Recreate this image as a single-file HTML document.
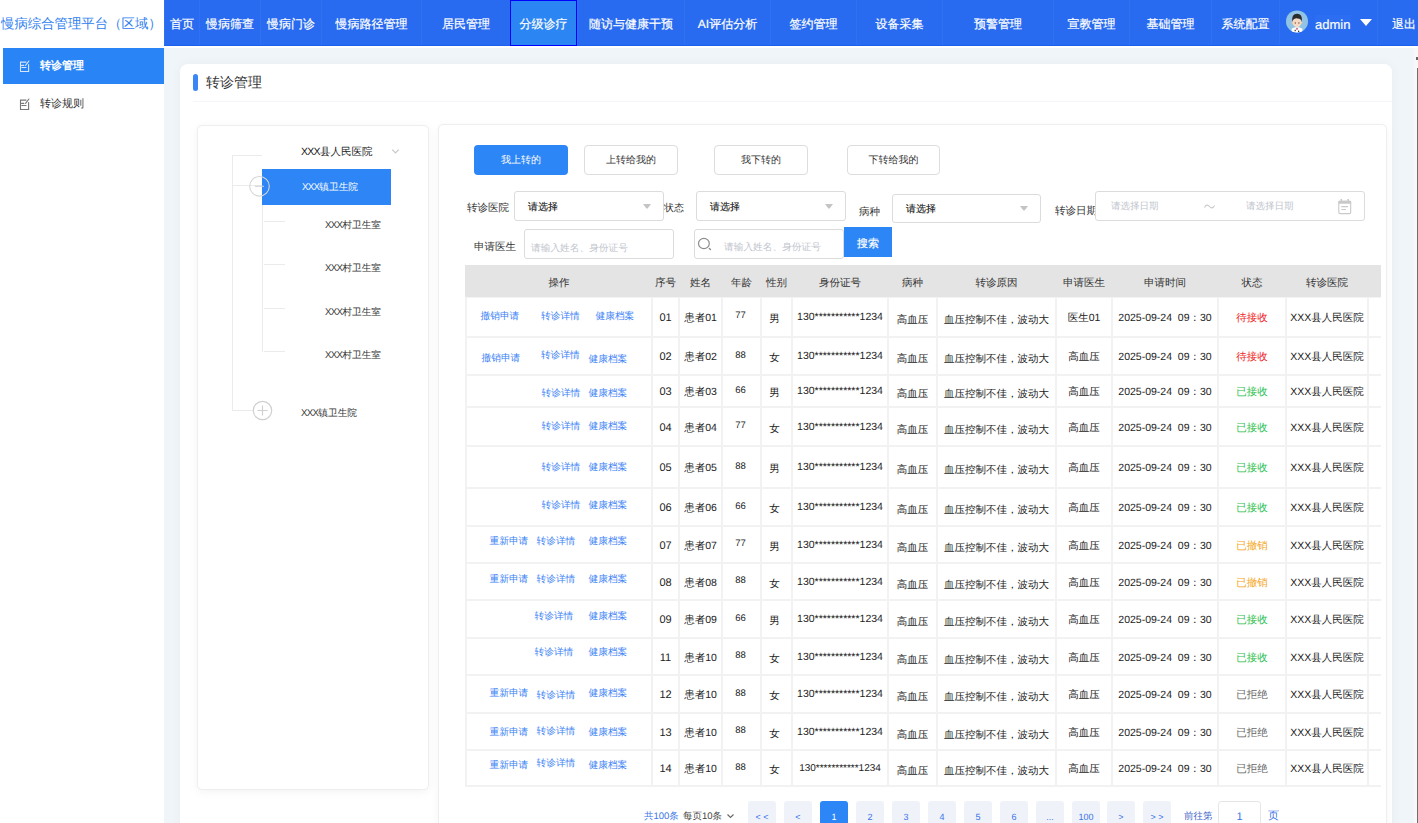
<!DOCTYPE html><html><head><meta charset="utf-8"><style>
*{box-sizing:border-box;margin:0;padding:0}
html,body{width:1418px;height:823px;overflow:hidden;background:#fff;font-family:"Liberation Sans",sans-serif;color:#222;text-rendering:geometricPrecision}
.ab{position:absolute}
.c{position:absolute;display:flex;align-items:center;justify-content:center;white-space:nowrap}
.nav{position:absolute;top:0;height:45px;display:flex;align-items:center;justify-content:center;color:#fff;font-size:12px;white-space:nowrap;border-left:1px solid #2f72f1;padding-top:3px;-webkit-text-stroke:0.2px #fff}
.lk{position:absolute;font-size:9.7px;line-height:10px;color:#3b82f6;white-space:nowrap}
.pg{position:absolute;top:801px;width:28px;height:30px;border-radius:3px;background:#eff3f9;color:#3b74e8;font-size:9px;line-height:12px;display:flex;justify-content:center;padding-top:10px}
.x{letter-spacing:-0.7px}

</style></head><body>
<div class="ab" style="left:0;top:0;width:164px;height:45px;background:#fff"></div>
<div class="c" style="left:0;top:0;width:164px;height:46px;color:#2f80ef;font-size:13.4px;justify-content:flex-start;padding-left:1px;padding-top:1px">慢病综合管理平台（区域）</div>
<div class="ab" style="left:164px;top:0;width:1254px;height:46px;background:#286af0;border-bottom:1px solid #1c60ee"></div>
<div class="nav" style="left:164px;width:35px">首页</div>
<div class="nav" style="left:199px;width:61px">慢病筛查</div>
<div class="nav" style="left:260px;width:61px">慢病门诊</div>
<div class="nav" style="left:321px;width:100px">慢病路径管理</div>
<div class="nav" style="left:421px;width:89px">居民管理</div>
<div class="nav" style="left:510px;width:67px;background:#2b86f3;border:1px solid #0000ff;height:46px;padding-top:2px">分级诊疗</div>
<div class="nav" style="left:577px;width:107px">随访与健康干预</div>
<div class="nav" style="left:684px;width:86px">AI评估分析</div>
<div class="nav" style="left:770px;width:86px">签约管理</div>
<div class="nav" style="left:856px;width:86px">设备采集</div>
<div class="nav" style="left:942px;width:111px">预警管理</div>
<div class="nav" style="left:1053px;width:76px">宣教管理</div>
<div class="nav" style="left:1129px;width:82px">基础管理</div>
<div class="nav" style="left:1211px;width:68px">系统配置</div>
<div class="nav" style="left:1279px;width:98px"></div>
<svg class="ab" style="left:1286px;top:10px" width="23" height="23" viewBox="0 0 23 23">
<defs><clipPath id="av"><circle cx="11" cy="11.4" r="11"/></clipPath></defs>
<circle cx="11" cy="11.4" r="11" fill="#91c4e4"/>
<g clip-path="url(#av)">
<path d="M5.2 24 L5.8 18.6 Q11 15.6 16.2 18.6 L16.8 24Z" fill="#fdfdfd"/>
<path d="M9.2 16.5 L11 19.2 L12.8 16.5Z" fill="#e6e9ee"/>
<circle cx="11" cy="18.8" r="0.9" fill="#c2406a"/>
<rect x="8.6" y="19.8" width="1.2" height="1.4" fill="#333"/>
<rect x="12.1" y="20.6" width="1.1" height="1.6" fill="#222"/>
</g>
<ellipse cx="6.5" cy="12.6" rx="0.9" ry="1.2" fill="#eec4a6"/>
<ellipse cx="15.5" cy="12.6" rx="0.9" ry="1.2" fill="#eec4a6"/>
<ellipse cx="11" cy="12.6" rx="4.4" ry="4.6" fill="#f5d9c2"/>
<path d="M6.1 12 Q5.4 3.9 11 3.8 Q16.8 3.9 15.9 12 Q15.3 8.2 11.5 8.4 Q7.2 8 6.1 12Z" fill="#2b2b2b"/>
<circle cx="9.3" cy="13" r="0.65" fill="#6b4b3b"/>
<circle cx="12.9" cy="13" r="0.65" fill="#6b4b3b"/>
</svg>
<div class="ab" style="left:1315px;top:15px;width:36px;height:15px;background:#2c6ef1"></div>
<div class="ab" style="left:1315px;top:16px;font-size:13px;line-height:18px;color:#fff;-webkit-text-stroke:0.15px #fff">admin</div>
<svg class="ab" style="left:1360px;top:19px" width="12" height="7" viewBox="0 0 12 7"><path d="M0 0H12L6 7Z" fill="#fff"/></svg>
<div class="nav" style="left:1377px;width:60px;justify-content:flex-start;padding-left:14px">退出</div>
<div class="ab" style="left:0;top:46px;width:1418px;height:2px;background:#fff"></div>
<div class="ab" style="left:164px;top:48px;width:1250px;height:775px;background:#f0f5fa"></div>
<div class="ab" style="left:1414px;top:48px;width:4px;height:775px;background:#f8f8f8"></div>
<div class="ab" style="left:1416px;top:57px;width:2px;height:3px;background:#666"></div>
<div class="ab" style="left:3px;top:48px;width:161px;height:36px;background:#2984f5"></div>
<svg class="ab" style="left:19px;top:59.6px" width="12" height="13" viewBox="0 0 12 13" fill="none" stroke="#fff" stroke-width="1.1" stroke-opacity="0.8" stroke-linecap="round">
<path d="M7 2.1H1.5V11.5H9.6V4.6"/><path d="M6.6 5.4L9.9 1"/><path d="M2.6 5.4H4.8M2.8 7.5H7"/></svg>
<div class="ab" style="left:40px;top:59px;font-size:11px;line-height:14px;color:#fff;font-weight:700">转诊管理</div>
<svg class="ab" style="left:19px;top:97.6px" width="12" height="13" viewBox="0 0 12 13" fill="none" stroke="#555" stroke-width="1.1" stroke-opacity="0.8" stroke-linecap="round">
<path d="M7 2.1H1.5V11.5H9.6V4.6"/><path d="M6.6 5.4L9.9 1"/><path d="M2.6 5.4H4.8M2.8 7.5H7"/></svg>
<div class="ab" style="left:40px;top:97px;font-size:11px;line-height:14px;color:#333">转诊规则</div>
<div class="ab" style="left:1417px;top:68px;width:1px;height:755px;background:#6e6e6e"></div>
<div class="ab" style="left:180px;top:64px;width:1212px;height:800px;background:#fff;border-radius:8px;box-shadow:0 0 12px rgba(0,0,0,0.04)"></div>
<div class="ab" style="left:193px;top:74px;width:5px;height:17px;background:#3b86f7;border-radius:3px"></div>
<div class="ab" style="left:206px;top:72px;font-size:14px;line-height:20px;color:#333">转诊管理</div>
<div class="ab" style="left:193px;top:101px;width:1199px;height:1px;background:#f3f5f8"></div>
<div class="ab" style="left:197px;top:125px;width:232px;height:665px;background:#fff;border:1px solid #eee;border-radius:5px;box-shadow:0 2px 10px rgba(0,0,0,0.05)"></div>
<div class="ab" style="left:232px;top:155px;width:1px;height:256px;background:#ebebeb"></div>
<div class="ab" style="left:232px;top:155px;width:30px;height:1px;background:#ebebeb"></div>
<div class="ab" style="left:232px;top:185px;width:30px;height:1px;background:#ebebeb"></div>
<div class="ab" style="left:232px;top:410px;width:22px;height:1px;background:#ebebeb"></div>
<div class="ab" style="left:301px;top:144px;font-size:10.5px;line-height:16px;color:#222"><span class=x>XXX</span>县人民医院</div>
<svg class="ab" style="left:391px;top:148px" width="9" height="7" viewBox="0 0 9 7"><path d="M1.3 1.6L4.5 4.9L7.7 1.6" fill="none" stroke="#c8c8c8" stroke-width="1.3"/></svg>
<div class="ab" style="left:262px;top:169px;width:129px;height:36px;background:#2d85f6"></div>
<svg class="ab" style="left:248px;top:175px" width="23" height="23" viewBox="0 0 23 23"><circle cx="11.5" cy="11.3" r="9.8" fill="none" stroke="#d6d6d6" stroke-width="1.1"/><path d="M7 11.3H16" stroke="#d0d0d0" stroke-width="1"/></svg>
<div class="ab" style="left:302px;top:181px;font-size:9.7px;line-height:14px;color:#fff"><span class=x>XXX</span>镇卫生院</div>
<div class="ab" style="left:262px;top:205px;width:1px;height:147px;background:#ebebeb"></div>
<div class="ab" style="left:264px;top:221px;width:21px;height:1px;background:#ebebeb"></div>
<div class="ab" style="left:325px;top:219px;font-size:9.7px;line-height:14px;color:#333"><span class=x>XXX</span>村卫生室</div>
<div class="ab" style="left:264px;top:264px;width:21px;height:1px;background:#ebebeb"></div>
<div class="ab" style="left:325px;top:262px;font-size:9.7px;line-height:14px;color:#333"><span class=x>XXX</span>村卫生室</div>
<div class="ab" style="left:264px;top:308px;width:21px;height:1px;background:#ebebeb"></div>
<div class="ab" style="left:325px;top:306px;font-size:9.7px;line-height:14px;color:#333"><span class=x>XXX</span>村卫生室</div>
<div class="ab" style="left:264px;top:351px;width:21px;height:1px;background:#ebebeb"></div>
<div class="ab" style="left:325px;top:349px;font-size:9.7px;line-height:14px;color:#333"><span class=x>XXX</span>村卫生室</div>
<svg class="ab" style="left:252px;top:400px" width="21" height="21" viewBox="0 0 21 21"><circle cx="10.5" cy="10.5" r="9.2" fill="#fff" stroke="#d0d0d0" stroke-width="1.2"/><path d="M5.5 10.5H15.5M10.5 5.5V15.5" stroke="#d0d0d0" stroke-width="1.2"/></svg>
<div class="ab" style="left:301px;top:407px;font-size:9.7px;line-height:14px;color:#333"><span class=x>XXX</span>镇卫生院</div>
<div class="ab" style="left:438px;top:124px;width:949px;height:760px;background:#fff;border:1px solid #eee;border-radius:5px;box-shadow:0 2px 10px rgba(0,0,0,0.04)"></div>
<div class="c" style="left:474px;top:145px;width:94px;height:30px;background:#2d86f6;border-radius:4px;color:#fff;font-size:10px">我上转的</div>
<div class="c" style="left:584px;top:145px;width:94px;height:30px;background:#fff;border:1px solid #ddd;border-radius:4px;color:#333;font-size:10px">上转给我的</div>
<div class="c" style="left:714px;top:145px;width:94px;height:30px;background:#fff;border:1px solid #ddd;border-radius:4px;color:#333;font-size:10px">我下转的</div>
<div class="c" style="left:847px;top:145px;width:93px;height:30px;background:#fff;border:1px solid #ddd;border-radius:4px;color:#333;font-size:10px">下转给我的</div>
<div class="ab" style="left:467px;top:201px;font-size:10.5px;line-height:14px;color:#333">转诊医院</div>
<div class="ab" style="left:514px;top:191px;width:150px;height:30px;border:1px solid #dcdcdc;border-radius:3px;background:#fff"></div>
<div class="ab" style="left:528px;top:201px;font-size:10px;line-height:14px;color:#111;-webkit-text-stroke:0.1px #111">请选择</div>
<svg class="ab" style="left:643px;top:204px" width="8" height="5" viewBox="0 0 8 5"><path d="M0 0H8L4.6 4.6H3.4Z" fill="#c4c4c4"/></svg>
<div class="ab" style="left:664px;top:202px;font-size:10px;line-height:14px;color:#333">状态</div>
<div class="ab" style="left:696px;top:191px;width:150px;height:30px;border:1px solid #dcdcdc;border-radius:3px;background:#fff"></div>
<div class="ab" style="left:710px;top:201px;font-size:10px;line-height:14px;color:#111;-webkit-text-stroke:0.1px #111">请选择</div>
<svg class="ab" style="left:825px;top:204px" width="8" height="5" viewBox="0 0 8 5"><path d="M0 0H8L4.6 4.6H3.4Z" fill="#c4c4c4"/></svg>
<div class="ab" style="left:859px;top:205px;font-size:10.5px;line-height:14px;color:#333">病种</div>
<div class="ab" style="left:892px;top:194px;width:149px;height:29px;border:1px solid #dcdcdc;border-radius:3px;background:#fff"></div>
<div class="ab" style="left:906px;top:203px;font-size:10px;line-height:14px;color:#111;-webkit-text-stroke:0.1px #111">请选择</div>
<svg class="ab" style="left:1020px;top:206px" width="8" height="5" viewBox="0 0 8 5"><path d="M0 0H8L4.6 4.6H3.4Z" fill="#c4c4c4"/></svg>
<div class="ab" style="left:1055px;top:204px;font-size:10.5px;line-height:14px;color:#333">转诊日期</div>
<div class="ab" style="left:1095px;top:191px;width:270px;height:30px;border:1px solid #dcdcdc;border-radius:3px;background:#fff"></div>
<div class="ab" style="left:1111px;top:200px;font-size:9.5px;line-height:14px;color:#c0c4cc">请选择日期</div>
<svg class="ab" style="left:1204px;top:204px" width="11" height="5" viewBox="0 0 11 5"><path d="M0.5 3.5C2 0.5 4 0.5 5.5 2.5S9 4.5 10.5 1.5" fill="none" stroke="#c8c8c8" stroke-width="1.1"/></svg>
<div class="ab" style="left:1246px;top:200px;font-size:9.5px;line-height:14px;color:#c0c4cc">请选择日期</div>
<svg class="ab" style="left:1337px;top:198px" width="15" height="17" viewBox="0 0 15 17"><rect x="1.8" y="3.3" width="11.9" height="12.3" rx="1.3" fill="none" stroke="#c9c9c9" stroke-width="1.1"/><rect x="1.3" y="2.8" width="12.9" height="3" rx="1" fill="#c9c9c9"/><rect x="3.5" y="1" width="1.6" height="2.5" fill="#c9c9c9"/><rect x="10.4" y="1" width="1.6" height="2.5" fill="#c9c9c9"/><path d="M4.3 8.6H11M4.3 11.5H9" stroke="#c9c9c9" stroke-width="1.1"/></svg>
<div class="ab" style="left:474px;top:240px;font-size:10.5px;line-height:14px;color:#333">申请医生</div>
<div class="ab" style="left:524px;top:229px;width:150px;height:30px;border:1px solid #dcdcdc;border-radius:3px;background:#fff"></div>
<div class="ab" style="left:531px;top:242px;font-size:9.7px;line-height:14px;color:#c0c4cc">请输入姓名、身份证号</div>
<div class="ab" style="left:694px;top:229px;width:150px;height:30px;border:1px solid #dcdcdc;border-radius:3px;background:#fff"></div>
<svg class="ab" style="left:697px;top:237px" width="16" height="15" viewBox="0 0 16 15"><ellipse cx="6.9" cy="6.5" rx="5.4" ry="5.1" fill="none" stroke="#8c8c8c" stroke-width="1.2"/><path d="M12.3 11.4L13.5 12.5" stroke="#8c8c8c" stroke-width="1.4" stroke-linecap="round"/></svg>
<div class="ab" style="left:724px;top:241px;font-size:9.7px;line-height:14px;color:#c0c4cc">请输入姓名、身份证号</div>
<div class="c" style="left:844px;top:227px;width:48px;height:30px;background:#2d86f6;color:#fff;font-size:11px;padding-top:5px;-webkit-text-stroke:0.2px #fff">搜索</div>
<div class="ab" style="left:465px;top:265px;width:916px;height:32px;background:#e4e4e4"></div>
<div class="c" style="left:466px;top:265px;width:186px;height:32px;font-size:10.5px;color:#333"><span style="position:relative;top:3px">操作</span></div>
<div class="c" style="left:652px;top:265px;width:27px;height:32px;font-size:10.5px;color:#333"><span style="position:relative;top:3px">序号</span></div>
<div class="c" style="left:679px;top:265px;width:43px;height:32px;font-size:10.5px;color:#333"><span style="position:relative;top:3px">姓名</span></div>
<div class="c" style="left:722px;top:265px;width:39px;height:32px;font-size:10.5px;color:#333"><span style="position:relative;top:3px">年龄</span></div>
<div class="c" style="left:761px;top:265px;width:31px;height:32px;font-size:10.5px;color:#333"><span style="position:relative;top:3px">性别</span></div>
<div class="c" style="left:792px;top:265px;width:96px;height:32px;font-size:10.5px;color:#333"><span style="position:relative;top:3px">身份证号</span></div>
<div class="c" style="left:888px;top:265px;width:49px;height:32px;font-size:10.5px;color:#333"><span style="position:relative;top:3px">病种</span></div>
<div class="c" style="left:937px;top:265px;width:119px;height:32px;font-size:10.5px;color:#333"><span style="position:relative;top:3px">转诊原因</span></div>
<div class="c" style="left:1056px;top:265px;width:56px;height:32px;font-size:10.5px;color:#333"><span style="position:relative;top:3px">申请医生</span></div>
<div class="c" style="left:1112px;top:265px;width:106px;height:32px;font-size:10.5px;color:#333"><span style="position:relative;top:3px">申请时间</span></div>
<div class="c" style="left:1218px;top:265px;width:68px;height:32px;font-size:10.5px;color:#333"><span style="position:relative;top:3px">状态</span></div>
<div class="c" style="left:1286px;top:265px;width:82px;height:32px;font-size:10.5px;color:#333"><span style="position:relative;top:3px">转诊医院</span></div>
<div class="ab" style="left:465px;top:297px;width:2px;height:490px;background:#f2f2f2"></div>
<div class="ab" style="left:651px;top:297px;width:2px;height:490px;background:#f2f2f2"></div>
<div class="ab" style="left:678px;top:297px;width:2px;height:490px;background:#f2f2f2"></div>
<div class="ab" style="left:721px;top:297px;width:2px;height:490px;background:#f2f2f2"></div>
<div class="ab" style="left:760px;top:297px;width:2px;height:490px;background:#f2f2f2"></div>
<div class="ab" style="left:791px;top:297px;width:2px;height:490px;background:#f2f2f2"></div>
<div class="ab" style="left:887px;top:297px;width:2px;height:490px;background:#f2f2f2"></div>
<div class="ab" style="left:936px;top:297px;width:2px;height:490px;background:#f2f2f2"></div>
<div class="ab" style="left:1055px;top:297px;width:2px;height:490px;background:#f2f2f2"></div>
<div class="ab" style="left:1111px;top:297px;width:2px;height:490px;background:#f2f2f2"></div>
<div class="ab" style="left:1217px;top:297px;width:2px;height:490px;background:#f2f2f2"></div>
<div class="ab" style="left:1285px;top:297px;width:2px;height:490px;background:#f2f2f2"></div>
<div class="ab" style="left:1367px;top:297px;width:2px;height:490px;background:#f2f2f2"></div>
<div class="ab" style="left:465px;top:297px;width:916px;height:1px;background:#f3f3f3"></div>
<div class="ab" style="left:465px;top:336px;width:916px;height:2px;background:#f2f2f2"></div>
<div class="ab" style="left:465px;top:374px;width:916px;height:2px;background:#f2f2f2"></div>
<div class="ab" style="left:465px;top:406px;width:916px;height:2px;background:#f2f2f2"></div>
<div class="ab" style="left:465px;top:445px;width:916px;height:2px;background:#f2f2f2"></div>
<div class="ab" style="left:465px;top:487px;width:916px;height:2px;background:#f2f2f2"></div>
<div class="ab" style="left:465px;top:525px;width:916px;height:2px;background:#f2f2f2"></div>
<div class="ab" style="left:465px;top:562px;width:916px;height:2px;background:#f2f2f2"></div>
<div class="ab" style="left:465px;top:599px;width:916px;height:2px;background:#f2f2f2"></div>
<div class="ab" style="left:465px;top:637px;width:916px;height:2px;background:#f2f2f2"></div>
<div class="ab" style="left:465px;top:674px;width:916px;height:2px;background:#f2f2f2"></div>
<div class="ab" style="left:465px;top:712px;width:916px;height:2px;background:#f2f2f2"></div>
<div class="ab" style="left:465px;top:749px;width:916px;height:2px;background:#f2f2f2"></div>
<div class="ab" style="left:465px;top:785px;width:916px;height:2px;background:#f2f2f2"></div>
<div class="c" style="left:652px;top:297px;width:27px;height:39px;font-size:10.5px;font-size:11px;color:#222"><span style="position:relative;top:1px">01</span></div>
<div class="c" style="left:679px;top:297px;width:43px;height:39px;font-size:10.5px;"><span style="position:relative;top:2px">患者01</span></div>
<div class="c" style="left:721px;top:297px;width:39px;height:39px;font-size:10.5px;font-size:9.5px"><span style="position:relative;top:-1px">77</span></div>
<div class="c" style="left:759px;top:297px;width:31px;height:39px;font-size:10.5px;"><span style="position:relative;top:3px">男</span></div>
<div class="c" style="left:792px;top:297px;width:96px;height:39px;font-size:10.5px;"><span style="position:relative;top:0px">130***********1234</span></div>
<div class="c" style="left:888px;top:297px;width:49px;height:39px;font-size:10.5px;"><span style="position:relative;top:4px">高血压</span></div>
<div class="c" style="left:937px;top:297px;width:119px;height:39px;font-size:10.5px;"><span style="position:relative;top:4px">血压控制不佳，波动大</span></div>
<div class="c" style="left:1056px;top:297px;width:56px;height:39px;font-size:10.5px;"><span style="position:relative;top:2px">医生01</span></div>
<div class="c" style="left:1112px;top:297px;width:106px;height:39px;font-size:10.5px;"><span style="position:relative;top:2px">2025-09-24&nbsp;&nbsp;09：30</span></div>
<div class="c" style="left:1218px;top:297px;width:68px;height:39px;font-size:10.5px;color:#f01c24"><span style="position:relative;top:2px">待接收</span></div>
<div class="c" style="left:1286px;top:297px;width:82px;height:39px;font-size:10.5px;"><span style="position:relative;top:2px">XXX县人民医院</span></div>
<div class="c" style="left:652px;top:338px;width:27px;height:36px;font-size:10.5px;font-size:11px;color:#222"><span style="position:relative;top:1px">02</span></div>
<div class="c" style="left:679px;top:338px;width:43px;height:36px;font-size:10.5px;"><span style="position:relative;top:2px">患者02</span></div>
<div class="c" style="left:721px;top:338px;width:39px;height:36px;font-size:10.5px;font-size:9.5px"><span style="position:relative;top:-1px">88</span></div>
<div class="c" style="left:759px;top:338px;width:31px;height:36px;font-size:10.5px;"><span style="position:relative;top:3px">女</span></div>
<div class="c" style="left:792px;top:338px;width:96px;height:36px;font-size:10.5px;"><span style="position:relative;top:0px">130***********1234</span></div>
<div class="c" style="left:888px;top:338px;width:49px;height:36px;font-size:10.5px;"><span style="position:relative;top:4px">高血压</span></div>
<div class="c" style="left:937px;top:338px;width:119px;height:36px;font-size:10.5px;"><span style="position:relative;top:4px">血压控制不佳，波动大</span></div>
<div class="c" style="left:1056px;top:338px;width:56px;height:36px;font-size:10.5px;"><span style="position:relative;top:2px">高血压</span></div>
<div class="c" style="left:1112px;top:338px;width:106px;height:36px;font-size:10.5px;"><span style="position:relative;top:2px">2025-09-24&nbsp;&nbsp;09：30</span></div>
<div class="c" style="left:1218px;top:338px;width:68px;height:36px;font-size:10.5px;color:#f01c24"><span style="position:relative;top:2px">待接收</span></div>
<div class="c" style="left:1286px;top:338px;width:82px;height:36px;font-size:10.5px;"><span style="position:relative;top:2px">XXX县人民医院</span></div>
<div class="c" style="left:652px;top:376px;width:27px;height:30px;font-size:10.5px;font-size:11px;color:#222"><span style="position:relative;top:1px">03</span></div>
<div class="c" style="left:679px;top:376px;width:43px;height:30px;font-size:10.5px;"><span style="position:relative;top:2px">患者03</span></div>
<div class="c" style="left:721px;top:376px;width:39px;height:30px;font-size:10.5px;font-size:9.5px"><span style="position:relative;top:-1px">66</span></div>
<div class="c" style="left:759px;top:376px;width:31px;height:30px;font-size:10.5px;"><span style="position:relative;top:3px">男</span></div>
<div class="c" style="left:792px;top:376px;width:96px;height:30px;font-size:10.5px;"><span style="position:relative;top:0px">130***********1234</span></div>
<div class="c" style="left:888px;top:376px;width:49px;height:30px;font-size:10.5px;"><span style="position:relative;top:4px">高血压</span></div>
<div class="c" style="left:937px;top:376px;width:119px;height:30px;font-size:10.5px;"><span style="position:relative;top:4px">血压控制不佳，波动大</span></div>
<div class="c" style="left:1056px;top:376px;width:56px;height:30px;font-size:10.5px;"><span style="position:relative;top:2px">高血压</span></div>
<div class="c" style="left:1112px;top:376px;width:106px;height:30px;font-size:10.5px;"><span style="position:relative;top:2px">2025-09-24&nbsp;&nbsp;09：30</span></div>
<div class="c" style="left:1218px;top:376px;width:68px;height:30px;font-size:10.5px;color:#2fbf4f"><span style="position:relative;top:2px">已接收</span></div>
<div class="c" style="left:1286px;top:376px;width:82px;height:30px;font-size:10.5px;"><span style="position:relative;top:2px">XXX县人民医院</span></div>
<div class="c" style="left:652px;top:408px;width:27px;height:37px;font-size:10.5px;font-size:11px;color:#222"><span style="position:relative;top:1px">04</span></div>
<div class="c" style="left:679px;top:408px;width:43px;height:37px;font-size:10.5px;"><span style="position:relative;top:2px">患者04</span></div>
<div class="c" style="left:721px;top:408px;width:39px;height:37px;font-size:10.5px;font-size:9.5px"><span style="position:relative;top:-1px">77</span></div>
<div class="c" style="left:759px;top:408px;width:31px;height:37px;font-size:10.5px;"><span style="position:relative;top:3px">女</span></div>
<div class="c" style="left:792px;top:408px;width:96px;height:37px;font-size:10.5px;"><span style="position:relative;top:0px">130***********1234</span></div>
<div class="c" style="left:888px;top:408px;width:49px;height:37px;font-size:10.5px;"><span style="position:relative;top:4px">高血压</span></div>
<div class="c" style="left:937px;top:408px;width:119px;height:37px;font-size:10.5px;"><span style="position:relative;top:4px">血压控制不佳，波动大</span></div>
<div class="c" style="left:1056px;top:408px;width:56px;height:37px;font-size:10.5px;"><span style="position:relative;top:2px">高血压</span></div>
<div class="c" style="left:1112px;top:408px;width:106px;height:37px;font-size:10.5px;"><span style="position:relative;top:2px">2025-09-24&nbsp;&nbsp;09：30</span></div>
<div class="c" style="left:1218px;top:408px;width:68px;height:37px;font-size:10.5px;color:#2fbf4f"><span style="position:relative;top:2px">已接收</span></div>
<div class="c" style="left:1286px;top:408px;width:82px;height:37px;font-size:10.5px;"><span style="position:relative;top:2px">XXX县人民医院</span></div>
<div class="c" style="left:652px;top:447px;width:27px;height:40px;font-size:10.5px;font-size:11px;color:#222"><span style="position:relative;top:1px">05</span></div>
<div class="c" style="left:679px;top:447px;width:43px;height:40px;font-size:10.5px;"><span style="position:relative;top:2px">患者05</span></div>
<div class="c" style="left:721px;top:447px;width:39px;height:40px;font-size:10.5px;font-size:9.5px"><span style="position:relative;top:-1px">88</span></div>
<div class="c" style="left:759px;top:447px;width:31px;height:40px;font-size:10.5px;"><span style="position:relative;top:3px">男</span></div>
<div class="c" style="left:792px;top:447px;width:96px;height:40px;font-size:10.5px;"><span style="position:relative;top:0px">130***********1234</span></div>
<div class="c" style="left:888px;top:447px;width:49px;height:40px;font-size:10.5px;"><span style="position:relative;top:4px">高血压</span></div>
<div class="c" style="left:937px;top:447px;width:119px;height:40px;font-size:10.5px;"><span style="position:relative;top:4px">血压控制不佳，波动大</span></div>
<div class="c" style="left:1056px;top:447px;width:56px;height:40px;font-size:10.5px;"><span style="position:relative;top:2px">高血压</span></div>
<div class="c" style="left:1112px;top:447px;width:106px;height:40px;font-size:10.5px;"><span style="position:relative;top:2px">2025-09-24&nbsp;&nbsp;09：30</span></div>
<div class="c" style="left:1218px;top:447px;width:68px;height:40px;font-size:10.5px;color:#2fbf4f"><span style="position:relative;top:2px">已接收</span></div>
<div class="c" style="left:1286px;top:447px;width:82px;height:40px;font-size:10.5px;"><span style="position:relative;top:2px">XXX县人民医院</span></div>
<div class="c" style="left:652px;top:489px;width:27px;height:36px;font-size:10.5px;font-size:11px;color:#222"><span style="position:relative;top:1px">06</span></div>
<div class="c" style="left:679px;top:489px;width:43px;height:36px;font-size:10.5px;"><span style="position:relative;top:2px">患者06</span></div>
<div class="c" style="left:721px;top:489px;width:39px;height:36px;font-size:10.5px;font-size:9.5px"><span style="position:relative;top:-1px">66</span></div>
<div class="c" style="left:759px;top:489px;width:31px;height:36px;font-size:10.5px;"><span style="position:relative;top:3px">女</span></div>
<div class="c" style="left:792px;top:489px;width:96px;height:36px;font-size:10.5px;"><span style="position:relative;top:0px">130***********1234</span></div>
<div class="c" style="left:888px;top:489px;width:49px;height:36px;font-size:10.5px;"><span style="position:relative;top:4px">高血压</span></div>
<div class="c" style="left:937px;top:489px;width:119px;height:36px;font-size:10.5px;"><span style="position:relative;top:4px">血压控制不佳，波动大</span></div>
<div class="c" style="left:1056px;top:489px;width:56px;height:36px;font-size:10.5px;"><span style="position:relative;top:2px">高血压</span></div>
<div class="c" style="left:1112px;top:489px;width:106px;height:36px;font-size:10.5px;"><span style="position:relative;top:2px">2025-09-24&nbsp;&nbsp;09：30</span></div>
<div class="c" style="left:1218px;top:489px;width:68px;height:36px;font-size:10.5px;color:#2fbf4f"><span style="position:relative;top:2px">已接收</span></div>
<div class="c" style="left:1286px;top:489px;width:82px;height:36px;font-size:10.5px;"><span style="position:relative;top:2px">XXX县人民医院</span></div>
<div class="c" style="left:652px;top:527px;width:27px;height:35px;font-size:10.5px;font-size:11px;color:#222"><span style="position:relative;top:1px">07</span></div>
<div class="c" style="left:679px;top:527px;width:43px;height:35px;font-size:10.5px;"><span style="position:relative;top:2px">患者07</span></div>
<div class="c" style="left:721px;top:527px;width:39px;height:35px;font-size:10.5px;font-size:9.5px"><span style="position:relative;top:-1px">77</span></div>
<div class="c" style="left:759px;top:527px;width:31px;height:35px;font-size:10.5px;"><span style="position:relative;top:3px">男</span></div>
<div class="c" style="left:792px;top:527px;width:96px;height:35px;font-size:10.5px;"><span style="position:relative;top:0px">130***********1234</span></div>
<div class="c" style="left:888px;top:527px;width:49px;height:35px;font-size:10.5px;"><span style="position:relative;top:4px">高血压</span></div>
<div class="c" style="left:937px;top:527px;width:119px;height:35px;font-size:10.5px;"><span style="position:relative;top:4px">血压控制不佳，波动大</span></div>
<div class="c" style="left:1056px;top:527px;width:56px;height:35px;font-size:10.5px;"><span style="position:relative;top:2px">高血压</span></div>
<div class="c" style="left:1112px;top:527px;width:106px;height:35px;font-size:10.5px;"><span style="position:relative;top:2px">2025-09-24&nbsp;&nbsp;09：30</span></div>
<div class="c" style="left:1218px;top:527px;width:68px;height:35px;font-size:10.5px;color:#f5a623"><span style="position:relative;top:2px">已撤销</span></div>
<div class="c" style="left:1286px;top:527px;width:82px;height:35px;font-size:10.5px;"><span style="position:relative;top:2px">XXX县人民医院</span></div>
<div class="c" style="left:652px;top:564px;width:27px;height:35px;font-size:10.5px;font-size:11px;color:#222"><span style="position:relative;top:1px">08</span></div>
<div class="c" style="left:679px;top:564px;width:43px;height:35px;font-size:10.5px;"><span style="position:relative;top:2px">患者08</span></div>
<div class="c" style="left:721px;top:564px;width:39px;height:35px;font-size:10.5px;font-size:9.5px"><span style="position:relative;top:-1px">88</span></div>
<div class="c" style="left:759px;top:564px;width:31px;height:35px;font-size:10.5px;"><span style="position:relative;top:3px">女</span></div>
<div class="c" style="left:792px;top:564px;width:96px;height:35px;font-size:10.5px;"><span style="position:relative;top:0px">130***********1234</span></div>
<div class="c" style="left:888px;top:564px;width:49px;height:35px;font-size:10.5px;"><span style="position:relative;top:4px">高血压</span></div>
<div class="c" style="left:937px;top:564px;width:119px;height:35px;font-size:10.5px;"><span style="position:relative;top:4px">血压控制不佳，波动大</span></div>
<div class="c" style="left:1056px;top:564px;width:56px;height:35px;font-size:10.5px;"><span style="position:relative;top:2px">高血压</span></div>
<div class="c" style="left:1112px;top:564px;width:106px;height:35px;font-size:10.5px;"><span style="position:relative;top:2px">2025-09-24&nbsp;&nbsp;09：30</span></div>
<div class="c" style="left:1218px;top:564px;width:68px;height:35px;font-size:10.5px;color:#f5a623"><span style="position:relative;top:2px">已撤销</span></div>
<div class="c" style="left:1286px;top:564px;width:82px;height:35px;font-size:10.5px;"><span style="position:relative;top:2px">XXX县人民医院</span></div>
<div class="c" style="left:652px;top:601px;width:27px;height:36px;font-size:10.5px;font-size:11px;color:#222"><span style="position:relative;top:1px">09</span></div>
<div class="c" style="left:679px;top:601px;width:43px;height:36px;font-size:10.5px;"><span style="position:relative;top:2px">患者09</span></div>
<div class="c" style="left:721px;top:601px;width:39px;height:36px;font-size:10.5px;font-size:9.5px"><span style="position:relative;top:-1px">66</span></div>
<div class="c" style="left:759px;top:601px;width:31px;height:36px;font-size:10.5px;"><span style="position:relative;top:3px">男</span></div>
<div class="c" style="left:792px;top:601px;width:96px;height:36px;font-size:10.5px;"><span style="position:relative;top:0px">130***********1234</span></div>
<div class="c" style="left:888px;top:601px;width:49px;height:36px;font-size:10.5px;"><span style="position:relative;top:4px">高血压</span></div>
<div class="c" style="left:937px;top:601px;width:119px;height:36px;font-size:10.5px;"><span style="position:relative;top:4px">血压控制不佳，波动大</span></div>
<div class="c" style="left:1056px;top:601px;width:56px;height:36px;font-size:10.5px;"><span style="position:relative;top:2px">高血压</span></div>
<div class="c" style="left:1112px;top:601px;width:106px;height:36px;font-size:10.5px;"><span style="position:relative;top:2px">2025-09-24&nbsp;&nbsp;09：30</span></div>
<div class="c" style="left:1218px;top:601px;width:68px;height:36px;font-size:10.5px;color:#2fbf4f"><span style="position:relative;top:2px">已接收</span></div>
<div class="c" style="left:1286px;top:601px;width:82px;height:36px;font-size:10.5px;"><span style="position:relative;top:2px">XXX县人民医院</span></div>
<div class="c" style="left:652px;top:639px;width:27px;height:35px;font-size:10.5px;font-size:11px;color:#222"><span style="position:relative;top:1px">11</span></div>
<div class="c" style="left:679px;top:639px;width:43px;height:35px;font-size:10.5px;"><span style="position:relative;top:2px">患者10</span></div>
<div class="c" style="left:721px;top:639px;width:39px;height:35px;font-size:10.5px;font-size:9.5px"><span style="position:relative;top:-1px">88</span></div>
<div class="c" style="left:759px;top:639px;width:31px;height:35px;font-size:10.5px;"><span style="position:relative;top:3px">女</span></div>
<div class="c" style="left:792px;top:639px;width:96px;height:35px;font-size:10.5px;"><span style="position:relative;top:0px">130***********1234</span></div>
<div class="c" style="left:888px;top:639px;width:49px;height:35px;font-size:10.5px;"><span style="position:relative;top:4px">高血压</span></div>
<div class="c" style="left:937px;top:639px;width:119px;height:35px;font-size:10.5px;"><span style="position:relative;top:4px">血压控制不佳，波动大</span></div>
<div class="c" style="left:1056px;top:639px;width:56px;height:35px;font-size:10.5px;"><span style="position:relative;top:2px">高血压</span></div>
<div class="c" style="left:1112px;top:639px;width:106px;height:35px;font-size:10.5px;"><span style="position:relative;top:2px">2025-09-24&nbsp;&nbsp;09：30</span></div>
<div class="c" style="left:1218px;top:639px;width:68px;height:35px;font-size:10.5px;color:#2fbf4f"><span style="position:relative;top:2px">已接收</span></div>
<div class="c" style="left:1286px;top:639px;width:82px;height:35px;font-size:10.5px;"><span style="position:relative;top:2px">XXX县人民医院</span></div>
<div class="c" style="left:652px;top:676px;width:27px;height:36px;font-size:10.5px;font-size:11px;color:#222"><span style="position:relative;top:1px">12</span></div>
<div class="c" style="left:679px;top:676px;width:43px;height:36px;font-size:10.5px;"><span style="position:relative;top:2px">患者10</span></div>
<div class="c" style="left:721px;top:676px;width:39px;height:36px;font-size:10.5px;font-size:9.5px"><span style="position:relative;top:-1px">88</span></div>
<div class="c" style="left:759px;top:676px;width:31px;height:36px;font-size:10.5px;"><span style="position:relative;top:3px">女</span></div>
<div class="c" style="left:792px;top:676px;width:96px;height:36px;font-size:10.5px;"><span style="position:relative;top:0px">130***********1234</span></div>
<div class="c" style="left:888px;top:676px;width:49px;height:36px;font-size:10.5px;"><span style="position:relative;top:4px">高血压</span></div>
<div class="c" style="left:937px;top:676px;width:119px;height:36px;font-size:10.5px;"><span style="position:relative;top:4px">血压控制不佳，波动大</span></div>
<div class="c" style="left:1056px;top:676px;width:56px;height:36px;font-size:10.5px;"><span style="position:relative;top:2px">高血压</span></div>
<div class="c" style="left:1112px;top:676px;width:106px;height:36px;font-size:10.5px;"><span style="position:relative;top:2px">2025-09-24&nbsp;&nbsp;09：30</span></div>
<div class="c" style="left:1218px;top:676px;width:68px;height:36px;font-size:10.5px;color:#666"><span style="position:relative;top:2px">已拒绝</span></div>
<div class="c" style="left:1286px;top:676px;width:82px;height:36px;font-size:10.5px;"><span style="position:relative;top:2px">XXX县人民医院</span></div>
<div class="c" style="left:652px;top:714px;width:27px;height:35px;font-size:10.5px;font-size:11px;color:#222"><span style="position:relative;top:1px">13</span></div>
<div class="c" style="left:679px;top:714px;width:43px;height:35px;font-size:10.5px;"><span style="position:relative;top:2px">患者10</span></div>
<div class="c" style="left:721px;top:714px;width:39px;height:35px;font-size:10.5px;font-size:9.5px"><span style="position:relative;top:-1px">88</span></div>
<div class="c" style="left:759px;top:714px;width:31px;height:35px;font-size:10.5px;"><span style="position:relative;top:3px">女</span></div>
<div class="c" style="left:792px;top:714px;width:96px;height:35px;font-size:10.5px;"><span style="position:relative;top:0px">130***********1234</span></div>
<div class="c" style="left:888px;top:714px;width:49px;height:35px;font-size:10.5px;"><span style="position:relative;top:4px">高血压</span></div>
<div class="c" style="left:937px;top:714px;width:119px;height:35px;font-size:10.5px;"><span style="position:relative;top:4px">血压控制不佳，波动大</span></div>
<div class="c" style="left:1056px;top:714px;width:56px;height:35px;font-size:10.5px;"><span style="position:relative;top:2px">高血压</span></div>
<div class="c" style="left:1112px;top:714px;width:106px;height:35px;font-size:10.5px;"><span style="position:relative;top:2px">2025-09-24&nbsp;&nbsp;09：30</span></div>
<div class="c" style="left:1218px;top:714px;width:68px;height:35px;font-size:10.5px;color:#666"><span style="position:relative;top:2px">已拒绝</span></div>
<div class="c" style="left:1286px;top:714px;width:82px;height:35px;font-size:10.5px;"><span style="position:relative;top:2px">XXX县人民医院</span></div>
<div class="c" style="left:652px;top:751px;width:27px;height:34px;font-size:10.5px;font-size:11px;color:#222"><span style="position:relative;top:1px">14</span></div>
<div class="c" style="left:679px;top:751px;width:43px;height:34px;font-size:10.5px;"><span style="position:relative;top:2px">患者10</span></div>
<div class="c" style="left:721px;top:751px;width:39px;height:34px;font-size:10.5px;font-size:9.5px"><span style="position:relative;top:-1px">88</span></div>
<div class="c" style="left:759px;top:751px;width:31px;height:34px;font-size:10.5px;"><span style="position:relative;top:3px">女</span></div>
<div class="c" style="left:792px;top:751px;width:96px;height:34px;font-size:10.5px;font-size:10px"><span style="position:relative;top:0px">130***********1234</span></div>
<div class="c" style="left:888px;top:751px;width:49px;height:34px;font-size:10.5px;"><span style="position:relative;top:4px">高血压</span></div>
<div class="c" style="left:937px;top:751px;width:119px;height:34px;font-size:10.5px;"><span style="position:relative;top:4px">血压控制不佳，波动大</span></div>
<div class="c" style="left:1056px;top:751px;width:56px;height:34px;font-size:10.5px;"><span style="position:relative;top:2px">高血压</span></div>
<div class="c" style="left:1112px;top:751px;width:106px;height:34px;font-size:10.5px;"><span style="position:relative;top:2px">2025-09-24&nbsp;&nbsp;09：30</span></div>
<div class="c" style="left:1218px;top:751px;width:68px;height:34px;font-size:10.5px;color:#666"><span style="position:relative;top:2px">已拒绝</span></div>
<div class="c" style="left:1286px;top:751px;width:82px;height:34px;font-size:10.5px;"><span style="position:relative;top:2px">XXX县人民医院</span></div>
<div class="lk" style="left:480.5px;top:311.5px">撤销申请</div>
<div class="lk" style="left:541.0px;top:311.5px">转诊详情</div>
<div class="lk" style="left:595.5px;top:311.5px">健康档案</div>
<div class="lk" style="left:481.5px;top:353.5px">撤销申请</div>
<div class="lk" style="left:541.0px;top:350.6px">转诊详情</div>
<div class="lk" style="left:588.5px;top:354.7px">健康档案</div>
<div class="lk" style="left:541.5px;top:389.2px">转诊详情</div>
<div class="lk" style="left:588.5px;top:389.2px">健康档案</div>
<div class="lk" style="left:541.5px;top:422px">转诊详情</div>
<div class="lk" style="left:588.5px;top:422px">健康档案</div>
<div class="lk" style="left:541.5px;top:463px">转诊详情</div>
<div class="lk" style="left:588.5px;top:463px">健康档案</div>
<div class="lk" style="left:541.5px;top:501.1px">转诊详情</div>
<div class="lk" style="left:588.5px;top:501.1px">健康档案</div>
<div class="lk" style="left:489.5px;top:536.9px">重新申请</div>
<div class="lk" style="left:536.5px;top:536.9px">转诊详情</div>
<div class="lk" style="left:588.5px;top:536.9px">健康档案</div>
<div class="lk" style="left:489.5px;top:574.5px">重新申请</div>
<div class="lk" style="left:536.5px;top:574.5px">转诊详情</div>
<div class="lk" style="left:588.5px;top:574.5px">健康档案</div>
<div class="lk" style="left:534.5px;top:611.7px">转诊详情</div>
<div class="lk" style="left:588.5px;top:611.7px">健康档案</div>
<div class="lk" style="left:534.5px;top:648px">转诊详情</div>
<div class="lk" style="left:588.5px;top:648px">健康档案</div>
<div class="lk" style="left:489.5px;top:688.5px">重新申请</div>
<div class="lk" style="left:536.5px;top:690.8px">转诊详情</div>
<div class="lk" style="left:588.5px;top:688.5px">健康档案</div>
<div class="lk" style="left:489.5px;top:728.2px">重新申请</div>
<div class="lk" style="left:536.5px;top:726.8px">转诊详情</div>
<div class="lk" style="left:588.5px;top:728px">健康档案</div>
<div class="lk" style="left:489.5px;top:760.6px">重新申请</div>
<div class="lk" style="left:536.5px;top:759.2px">转诊详情</div>
<div class="lk" style="left:588.5px;top:760.6px">健康档案</div>
<div class="ab" style="left:644px;top:810px;font-size:9.5px;line-height:14px;color:#3b74e8">共100条</div>
<div class="ab" style="left:683px;top:810px;font-size:9.5px;line-height:14px;color:#444">每页10条</div>
<svg class="ab" style="left:727px;top:814px" width="7" height="5" viewBox="0 0 7 5"><path d="M0.5 0.5L3.5 3.5L6.5 0.5" fill="none" stroke="#666" stroke-width="1.1"/></svg>
<div class="pg" style="left:748px">&lt; &lt;</div>
<div class="pg" style="left:784px">&lt;</div>
<div class="pg" style="left:820px;background:#2d86f6;color:#fff">1</div>
<div class="pg" style="left:856px">2</div>
<div class="pg" style="left:892px">3</div>
<div class="pg" style="left:928px">4</div>
<div class="pg" style="left:964px">5</div>
<div class="pg" style="left:1000px">6</div>
<div class="pg" style="left:1036px">...</div>
<div class="pg" style="left:1072px">100</div>
<div class="pg" style="left:1107px">&gt;</div>
<div class="pg" style="left:1143px">&gt; &gt;</div>
<div class="ab" style="left:1184px;top:810px;font-size:9.5px;line-height:14px;color:#3a62c8">前往第</div>
<div class="c" style="left:1218px;top:801px;width:43px;height:30px;border:1px solid #e6e6e6;border-radius:3px;background:#fff;font-size:11px;color:#3b74e8;align-items:flex-start;padding-top:9px">1</div>
<div class="ab" style="left:1268px;top:809px;font-size:11px;line-height:14px;color:#3b74e8">页</div>
</body></html>
